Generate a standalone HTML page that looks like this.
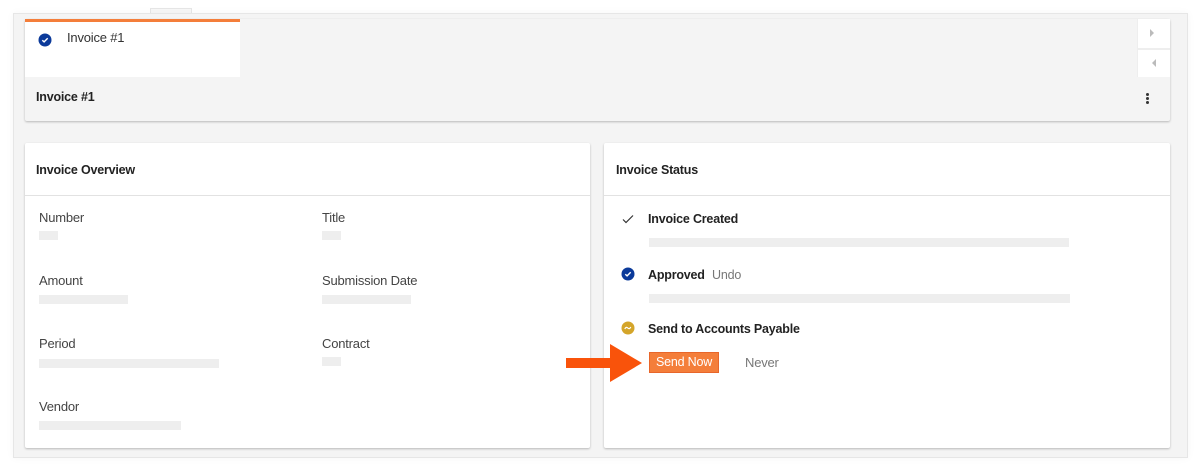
<!DOCTYPE html>
<html><head><style>
*{box-sizing:border-box;margin:0;padding:0}
body{width:1200px;height:471px;background:#fff;font-family:"Liberation Sans",sans-serif;position:relative;overflow:hidden;color:#222}
.abs{position:absolute}
.outer{left:13px;top:13px;width:1175px;height:445px;background:#f4f4f4;border:1px solid #e6e6e6;box-shadow:0 0 8px rgba(0,0,0,.04)}
.card{background:#fff;border-radius:2px;box-shadow:0 1px 2px rgba(0,0,0,.25)}
.lbl{font-size:13px;color:#444;letter-spacing:-0.2px}
.bar{background:#eeeeee;height:9px}
.h{font-size:12.5px;font-weight:bold;color:#222;letter-spacing:-0.2px}
</style></head><body>
<div class="abs" style="left:150px;top:8px;width:42px;height:6px;border:1px solid #e6e6e6;border-bottom:none;background:#f7f7f7"></div>
<div class="abs outer"></div>
<div class="abs card" style="left:25px;top:19px;width:1145px;height:102px;background:#f4f4f4"></div>
<div class="abs" style="left:25px;top:19px;width:215px;height:58px;background:#fff;border-top:3px solid #f47e3a"></div>
<svg class="abs" style="left:38px;top:33px" width="14" height="14"><circle cx="7" cy="7" r="6.5" fill="#0b3a9a"/><path d="M4.3 7.2l1.8 1.7 3.6-3.6" stroke="#fff" stroke-width="1.4" fill="none"/></svg>
<div class="abs" style="left:67px;top:30px;font-size:13px;color:#333;letter-spacing:-0.2px">Invoice #1</div>
<div class="abs" style="left:1137px;top:19px;width:33px;height:58px;background:#fff;border-left:1px solid #eee"></div>
<div class="abs" style="left:1137px;top:48px;width:33px;height:2px;background:#eee"></div>
<div class="abs" style="left:1150px;top:29px;width:0;height:0;border-left:4px solid #bbb;border-top:4px solid transparent;border-bottom:4px solid transparent"></div>
<div class="abs" style="left:1152px;top:59px;width:0;height:0;border-right:4px solid #bbb;border-top:4px solid transparent;border-bottom:4px solid transparent"></div>
<div class="abs h" style="left:36px;top:90px">Invoice #1</div>
<div class="abs" style="left:1146px;top:93px;width:3px;height:3px;background:#333;border-radius:50%;box-shadow:0 4px 0 #333,0 8px 0 #333"></div>

<div class="abs card" style="left:25px;top:143px;width:565px;height:305px"></div>
<div class="abs h" style="left:36px;top:163px">Invoice Overview</div>
<div class="abs" style="left:25px;top:195px;width:565px;height:1px;background:#e2e2e2"></div>
<div class="abs lbl" style="left:39px;top:210px">Number</div><div class="abs bar" style="left:39px;top:231px;width:19px"></div>
<div class="abs lbl" style="left:322px;top:210px">Title</div><div class="abs bar" style="left:322px;top:231px;width:19px"></div>
<div class="abs lbl" style="left:39px;top:273px">Amount</div><div class="abs bar" style="left:39px;top:295px;width:89px"></div>
<div class="abs lbl" style="left:322px;top:273px">Submission Date</div><div class="abs bar" style="left:322px;top:295px;width:89px"></div>
<div class="abs lbl" style="left:39px;top:336px">Period</div><div class="abs bar" style="left:39px;top:359px;width:180px"></div>
<div class="abs lbl" style="left:322px;top:336px">Contract</div><div class="abs bar" style="left:322px;top:357px;width:19px"></div>
<div class="abs lbl" style="left:39px;top:399px">Vendor</div><div class="abs bar" style="left:39px;top:421px;width:142px"></div>

<div class="abs card" style="left:604px;top:143px;width:566px;height:305px"></div>
<div class="abs h" style="left:616px;top:163px">Invoice Status</div>
<div class="abs" style="left:604px;top:195px;width:566px;height:1px;background:#e2e2e2"></div>
<svg class="abs" style="left:621px;top:213px" width="14" height="12"><path d="M2 6.5l3 3 7-7" stroke="#333" stroke-width="1.2" fill="none"/></svg>
<div class="abs h" style="left:648px;top:212px">Invoice Created</div>
<div class="abs bar" style="left:649px;top:238px;width:420px"></div>
<svg class="abs" style="left:621px;top:267px" width="14" height="14"><circle cx="7" cy="7" r="6.5" fill="#0b3a9a"/><path d="M4.3 7.2l1.8 1.7 3.6-3.6" stroke="#fff" stroke-width="1.4" fill="none"/></svg>
<div class="abs h" style="left:648px;top:268px">Approved <span style="font-weight:normal;color:#777;margin-left:4px">Undo</span></div>
<div class="abs bar" style="left:649px;top:294px;width:421px"></div>
<svg class="abs" style="left:621px;top:321px" width="14" height="14"><circle cx="7" cy="7" r="6.5" fill="#d4a52a"/><path d="M3.8 8c1-2 2-2 3 -1s2 1 3-1" stroke="#fff" stroke-width="1.2" fill="none"/></svg>
<div class="abs h" style="left:648px;top:322px">Send to Accounts Payable</div>
<div class="abs" style="left:649px;top:352px;width:70px;height:21px;background:#f47e3a;border:1px solid #e8662a;color:#fff;font-size:12.5px;line-height:19px;text-align:center;letter-spacing:-0.2px">Send Now</div>
<div class="abs" style="left:745px;top:355px;font-size:13px;color:#777;letter-spacing:-0.2px">Never</div>
<svg class="abs" style="left:566px;top:344px" width="76" height="38"><path d="M0 14h44V0l32 19-32 19V24H0z" fill="#f9530b"/></svg>
</body></html>
